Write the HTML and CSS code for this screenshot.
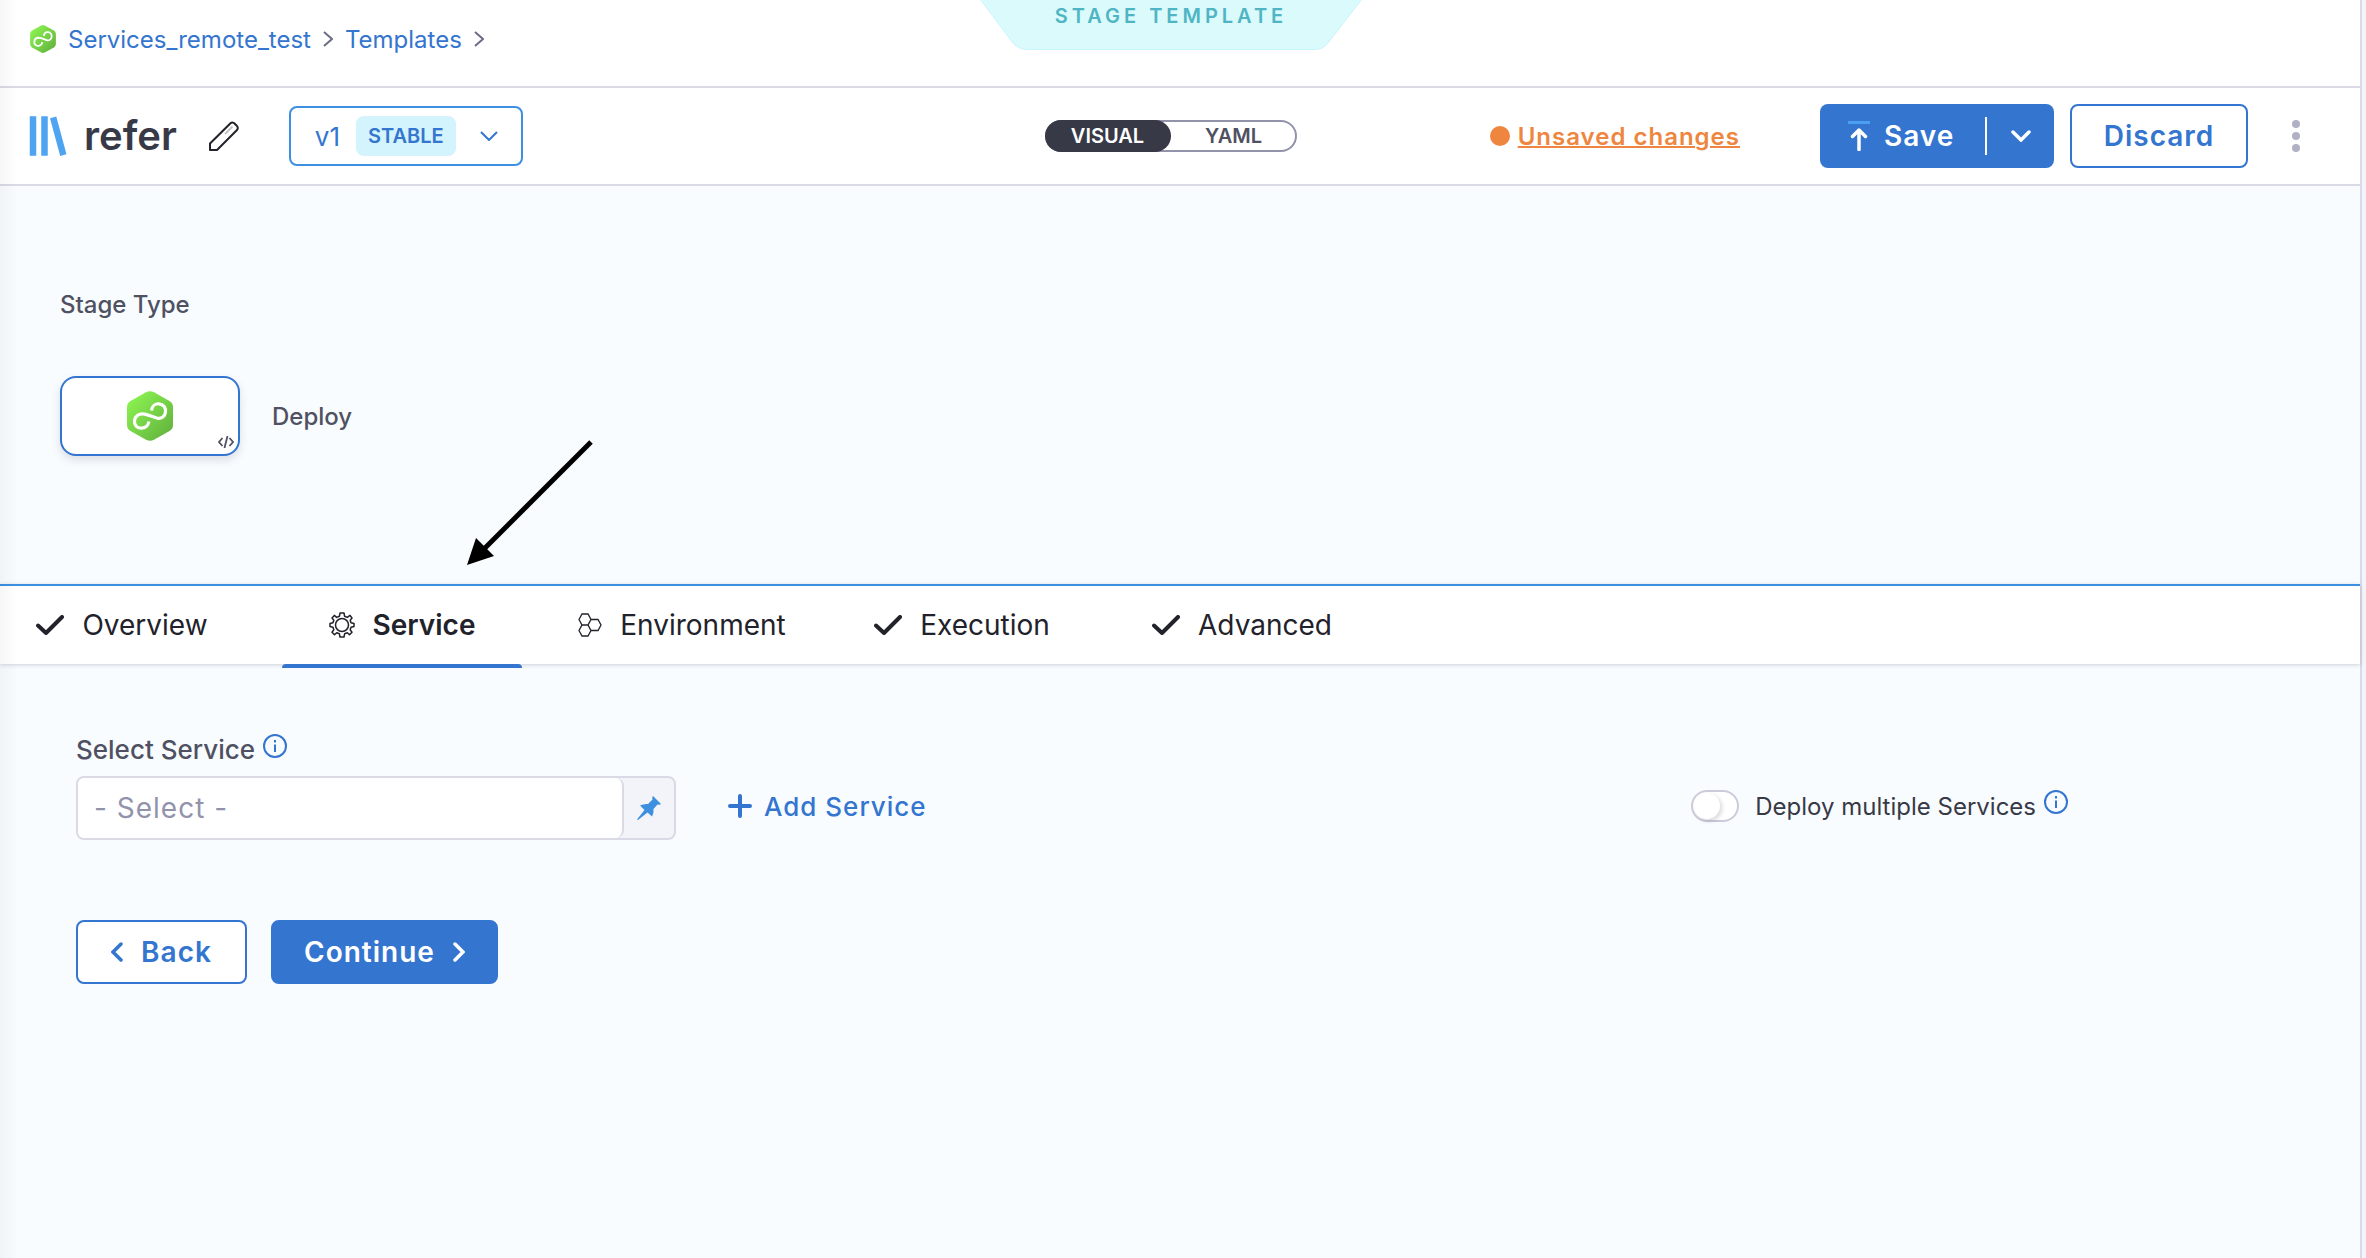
FILE: index.html
```html
<!DOCTYPE html>
<html lang="en">
<head>
<meta charset="utf-8">
<title>refer - Stage Template</title>
<link rel="stylesheet" href="styles.css">
</head>
<body>
<svg class="defs" aria-hidden="true">
  <defs>
    <linearGradient id="green" x1="0" y1="0" x2="1" y2="1">
      <stop offset="0.1" stop-color="#8bf251"/><stop offset="1" stop-color="#5fad3c"/>
    </linearGradient>
    <symbol id="cd" viewBox="0 0 46 50">
      <path d="M19 1.2Q23 -.9 27 1.2L42.500 10Q46 12.200 46 16V34Q46 37.800 42.500 40L27 48.800Q23 50.900 19 48.800L3.500 40Q0 37.800 0 34V16Q0 12.200 3.500 10Z" fill="url(#green)"/>
      <path d="M24.500 19.500C25 15 28 12.500 32 12.800C36.500 13.200 39 17 38.500 21C38 25.500 34.500 28 30.500 27.300C26.500 26.500 20.500 23 16 22.800C11.500 22.500 8 25.500 7.500 29.500C7 34 10 37 13.800 37.200C18 37.400 21.500 34.500 21.800 30.500" fill="none" stroke="#fff" stroke-width="3.200"/>
    </symbol>
    <symbol id="info" viewBox="0 0 24 24">
      <circle cx="12" cy="12" r="11" fill="none" stroke="#3375cf" stroke-width="2"/>
      <path d="M12 6V8.500M12 10.500V18" stroke="#3375cf" stroke-width="2"/>
    </symbol>
    <symbol id="check" viewBox="0 0 28 20">
      <path d="M2 10.500L10 18L26 2" fill="none" stroke="#22222a" stroke-width="4" stroke-linecap="round" stroke-linejoin="round"/>
    </symbol>
  </defs>
</svg>
<div class="page">
  <header class="crumbs">
    <nav class="crumb-list" aria-label="Breadcrumb">
      <svg class="crumb-logo"><use href="#cd"/></svg>
      <a href="#">Services_remote_test</a>
      <svg class="crumb-sep" viewBox="0 0 10 16"><path d="M1 1L9 8L1 15" fill="none" stroke="#6b6d85" stroke-width="2"/></svg>
      <a href="#">Templates</a>
      <svg class="crumb-sep" viewBox="0 0 10 16"><path d="M1 1L9 8L1 15" fill="none" stroke="#6b6d85" stroke-width="2"/></svg>
    </nav>
    <div class="ribbon">
      <svg class="ribbon-shape" viewBox="0 0 382 50"><path d="M0 -1L33 43Q39 49.500 47 49.500H335Q343 49.500 348 43L382 -1Z" fill="#dafafc" stroke="#c8f5fa"/></svg>
      <span class="ribbon-text">STAGE TEMPLATE</span>
    </div>
  </header>

  <section class="titlebar">
    <div class="title-left">
      <svg class="lib-icon" viewBox="0 0 38 40" fill="none" stroke="#4fa4f2" stroke-width="6.500" stroke-linecap="square"><path d="M4 3.500V36.500M15.500 3.500V36.500M25 4.500L33.500 36"/></svg>
      <h1>refer</h1>
      <button class="icon-btn pencil" aria-label="Edit name"><svg viewBox="0 0 30 30" width="30" height="30" fill="none"><path d="M1 29V22.500L21.500 2.200Q23 .8 25 2L28 5Q29.600 7 28 9L8 29Z" stroke="#22222a" stroke-width="2" stroke-linejoin="round"/><path d="M16 13L23.500 5.500" stroke="#c4c4c8" stroke-width="2"/></svg></button>
      <button class="version">v1 <span class="badge">STABLE</span><svg viewBox="0 0 18 10" width="18" height="10"><path d="M1 1L9 9L17 1" fill="none" stroke="#3375cf" stroke-width="2"/></svg></button>
    </div>
    <div class="mode"><button class="on">VISUAL</button><button>YAML</button></div>
    <div class="title-right">
      <span class="dot"></span>
      <a class="unsaved" href="#">Unsaved changes</a>
      <div class="save">
        <button class="save-main"><svg viewBox="0 0 22 30" width="22" height="30"><path d="M0 1.500H22" stroke="#4a9ff0" stroke-width="3"/><path d="M11 28.500V9.500M4.500 15.500L11 9L17.500 15.500" fill="none" stroke="#fff" stroke-width="3.500" stroke-linecap="round" stroke-linejoin="round"/></svg>Save</button>
        <button class="save-more" aria-label="More save options"><svg viewBox="0 0 20 12" width="20" height="12"><path d="M2 2L10 10L18 2" fill="none" stroke="#fff" stroke-width="3.500" stroke-linecap="round"/></svg></button>
      </div>
      <button class="btn discard">Discard</button>
      <button class="icon-btn more" aria-label="More options"><svg viewBox="0 0 8 32" width="8" height="32" fill="#b0b1c4"><circle cx="4" cy="4" r="4"/><circle cx="4" cy="16" r="4"/><circle cx="4" cy="28" r="4"/></svg></button>
    </div>
  </section>

  <section class="stage">
    <h2>Stage Type</h2>
    <div class="stage-row">
      <div class="card">
        <svg class="card-logo"><use href="#cd"/></svg>
        <svg class="card-code" viewBox="0 0 16 12" fill="none" stroke="#4f5162" stroke-width="1.800"><path d="M4.500 2L1 6L4.500 10M11.500 2L15 6L11.500 10M9.500 0L6.500 12"/></svg>
      </div>
      <span>Deploy</span>
    </div>
    <svg class="arrow" viewBox="0 0 130 130"><path d="M125 3L18 110" stroke="#000" stroke-width="5"/><path d="M1 126L10 99L28 117Z"/></svg>
  </section>

  <nav class="tabs" aria-label="Stage steps">
    <button><svg width="28" height="20"><use href="#check"/></svg>Overview</button>
    <button class="active"><svg width="26" height="26" viewBox="0 0 26 26" fill="none" stroke="#22222a" stroke-width="1.500" stroke-linejoin="round"><path d="M11 1H15L15.600 4.300L18.300 5.400L21 3.400L23 6L21.200 8.200L22 10.800L25 11.500V14.500L22 15.200L21.200 17.800L23 20.200L20.500 22.800L18.300 20.800L15.600 21.800L15 25H11L10.400 21.800L7.700 20.800L5.500 22.800L3 20.200L4.800 17.800L4 15.200L1 14.500V11.500L4 10.800L4.800 8.200L3 6L5.300 3.400L7.700 5.400L10.400 4.300Z"/><circle cx="13" cy="13" r="6.500"/></svg>Service</button>
    <button><svg width="24" height="24" viewBox="0 0 24 24" fill="none" stroke="#22222a" stroke-width="1.300"><path d="M4 1H10L13 6.500L10 12H4L1 6.500ZM4 12H10L13 17.500L10 23H4L1 17.500ZM13 6.500H20L23 12L20 17.500H13L10 12Z"/></svg>Environment</button>
    <button><svg width="28" height="20"><use href="#check"/></svg>Execution</button>
    <button><svg width="28" height="20"><use href="#check"/></svg>Advanced</button>
  </nav>

  <main class="form">
    <div class="label"><label for="service">Select Service</label><svg class="info"><use href="#info"/></svg></div>
    <div class="form-row">
      <div class="picker">
        <input id="service" type="text" placeholder="- Select -">
        <button class="pin" aria-label="Value type"><svg viewBox="0 0 24 24" width="24" height="24" fill="#3d8fe0"><path d="M16 0L24 8L22.500 8.800L20.500 8.500L16.500 13Q17 17 15 20.500L10.500 16.500L1 24L0 23.500L7.500 14L3 9.500Q7 7.500 11 8L15.500 3.500L15.200 1.500Z"/></svg></button>
      </div>
      <button class="add"><svg viewBox="0 0 24 24" width="24" height="24"><path d="M12 2V22M2 12H22" stroke="#3375cf" stroke-width="4" stroke-linecap="round"/></svg>Add Service</button>
      <div class="multi">
        <input id="multi" class="switch" type="checkbox" role="switch"><label for="multi">Deploy multiple Services</label><svg class="info"><use href="#info"/></svg>
      </div>
    </div>
    <div class="actions">
      <button class="btn back"><svg viewBox="0 0 12 20" width="12" height="20"><path d="M10 2L2 10L10 18" fill="none" stroke="#3375cf" stroke-width="3.500" stroke-linecap="round"/></svg>Back</button>
      <button class="btn primary">Continue<svg viewBox="0 0 12 20" width="12" height="20"><path d="M2 2L10 10L2 18" fill="none" stroke="#fff" stroke-width="3.500" stroke-linecap="round"/></svg></button>
    </div>
  </main>
</div>
</body>
</html>
```
FILE: styles.css
```css
* { box-sizing: border-box; }
html { height: 100%; }
body {
  margin: 0;
  min-height: 100%;
  display: flex;
  background: #f3f3fa;
  padding-right: 4px;
  font-family: Inter, "Liberation Sans", sans-serif;
  font-size: 24px;
  color: #22222a;
}
button, input { font: inherit; color: inherit; }
button { margin: 0; padding: 0; border: 0; background: none; cursor: pointer; }
svg { flex: none; display: block; }
.defs { position: absolute; width: 0; height: 0; }

.page {
  position: relative;
  flex: 1;
  display: flex;
  flex-direction: column;
  background: #f8fcff;
  border-right: 2px solid #d9dae5;
}
.page::before {
  content: "";
  position: absolute;
  inset: 0 auto 0 0;
  width: 18px;
  background: linear-gradient(to right, rgba(40, 41, 61, .04), rgba(40, 41, 61, 0));
  pointer-events: none;
  z-index: 2;
}

.crumbs {
  position: relative;
  height: 88px;
  padding: 23px 30px 0;
  background: #fff;
  border-bottom: 2px solid #d9dae5;
}
.crumb-list { display: flex; align-items: center; gap: 12px; height: 32px; }
.crumb-list a { color: #3375cf; text-decoration: none; }
.crumb-logo { width: 26px; height: 28px; }
.crumb-sep { width: 10px; height: 16px; }
.ribbon { position: absolute; top: 0; left: calc(50% - 200px); width: 382px; height: 50px; }
.ribbon-shape { width: 382px; height: 50px; }
.ribbon-text {
  position: absolute;
  inset: 4px 0 auto;
  text-align: center;
  font-size: 20px;
  line-height: 24px;
  font-weight: 600;
  letter-spacing: 4px;
  color: #4fb5c4;
}

.titlebar {
  display: grid;
  grid-template-columns: 1fr auto 1fr;
  align-items: center;
  height: 98px;
  padding: 0 60px 0 29px;
  background: #fff;
  border-bottom: 2px solid #d9dae5;
}
.title-left, .title-right { display: flex; align-items: center; }
.title-right { justify-content: flex-end; }
.lib-icon { width: 38px; height: 40px; }
h1 { margin: 0 32px 0 17px; font-size: 40px; line-height: 48px; font-weight: 600; color: #383946; }
.version {
  display: flex;
  align-items: center;
  width: 234px;
  height: 60px;
  margin-left: 50px;
  padding: 0 24px;
  border: 2px solid #3d8fe0;
  border-radius: 8px;
  font-size: 26px;
  color: #3375cf;
}
.badge { margin: 0 24px 0 16px; padding: 0 12px; border-radius: 8px; background: #d3f3fd; font-size: 20px; line-height: 40px; font-weight: 600; }
.mode { display: flex; width: 252px; height: 32px; margin-left: 12px; border-radius: 16px; box-shadow: inset 0 0 0 2px #9293ab; }
.mode button { flex: 1; border-radius: 16px; font-size: 20px; line-height: 32px; font-weight: 600; color: #4f5162; }
.mode .on { background: #383946; color: #fff; }
.dot { width: 20px; height: 20px; margin-right: 8px; border-radius: 50%; background: #ee8640; }
.unsaved { margin-right: 80px; color: #ee8640; font-weight: 600; letter-spacing: 1px; text-decoration-thickness: 2px; }
.save { display: flex; align-items: center; width: 234px; height: 64px; margin-right: 16px; border-radius: 8px; background: #3375cf; color: #fff; }
.save-main { display: flex; align-items: center; gap: 14px; flex: 1; height: 38px; padding-left: 28px; border-right: 2px solid #fff; font-size: 28px; font-weight: 600; letter-spacing: 1px; }
.save-more { display: flex; justify-content: center; width: 67px; }
.btn {
  display: flex;
  align-items: center;
  justify-content: center;
  height: 64px;
  border: 2px solid #3375cf;
  border-radius: 8px;
  background: #fff;
  font-size: 28px;
  font-weight: 600;
  letter-spacing: 1px;
  color: #3375cf;
}
.discard { width: 178px; margin-right: 44px; }

.stage { position: relative; height: 398px; padding: 104px 60px 0; font-weight: 500; color: #4f5162; }
h2 { margin: 0; font-size: 24px; line-height: 30px; font-weight: 500; }
.stage-row { display: flex; align-items: center; gap: 32px; margin-top: 56px; }
.card {
  position: relative;
  display: grid;
  place-items: center;
  width: 180px;
  height: 80px;
  border: 2px solid #3375cf;
  border-radius: 16px;
  background: #fff;
  box-shadow: 0 4px 8px rgba(96, 97, 112, .18);
}
.card-logo { width: 46px; height: 50px; }
.card-code { position: absolute; right: 4px; bottom: 6px; width: 16px; height: 12px; }
.arrow { position: absolute; left: 466px; top: 253px; width: 130px; height: 130px; }

.tabs {
  display: flex;
  gap: 40px;
  height: 80px;
  padding-left: 2px;
  background: #fff;
  border-top: 2px solid #3d8fe0;
  box-shadow: 0 1px 4px rgba(40, 41, 61, .2);
}
.tabs button { position: relative; display: flex; align-items: center; justify-content: center; gap: 18px; width: 240px; height: 78px; font-size: 28px; }
.tabs .active { font-weight: 600; }
.tabs .active::after { content: ""; position: absolute; inset: auto 0 -4px; height: 4px; border-radius: 4px 4px 0 0; background: #3375cf; }

.form { padding: 68px 292px 60px 76px; }
.label { display: flex; gap: 8px; height: 44px; font-size: 26px; line-height: 36px; font-weight: 500; color: #4f5162; }
.info { width: 24px; height: 24px; }
.label .info { margin-top: 2px; }
.form-row { display: flex; align-items: center; }
.picker { display: flex; width: 600px; height: 64px; border: 2px solid #d9dae5; border-radius: 8px; background: #f3f3fa; overflow: hidden; }
.picker input { flex: 1; min-width: 0; padding: 0 16px; border: 0; border-right: 2px solid #d9dae5; border-radius: 0 8px 8px 0; background: #fff; font-size: 28px; letter-spacing: 1px; outline: 0; }
.picker input::placeholder { color: #9293ab; opacity: 1; }
.pin { display: grid; place-items: center; width: 50px; }
.add, .multi { padding-bottom: 4px; }
.add { display: flex; align-items: center; gap: 12px; margin-left: 52px; font-size: 26px; font-weight: 500; letter-spacing: 1px; color: #3375cf; }
.multi { display: flex; align-items: center; margin-left: auto; color: #383946; }
.multi .info { margin: 0 0 8px 8px; }
.switch { appearance: none; display: flex; width: 48px; height: 32px; margin: 0 16px 0 0; padding: 1px; border: 2px solid #cccbdc; border-radius: 16px; background: #fff; }
.switch::before { content: ""; width: 26px; height: 26px; border-radius: 50%; background: #fff; box-shadow: 2px 2px 4px rgba(40, 41, 61, .18); }
.actions { display: flex; gap: 24px; margin-top: 80px; }
.back { width: 171px; gap: 18px; }
.primary { width: 227px; gap: 18px; background: #3375cf; color: #fff; }
```
